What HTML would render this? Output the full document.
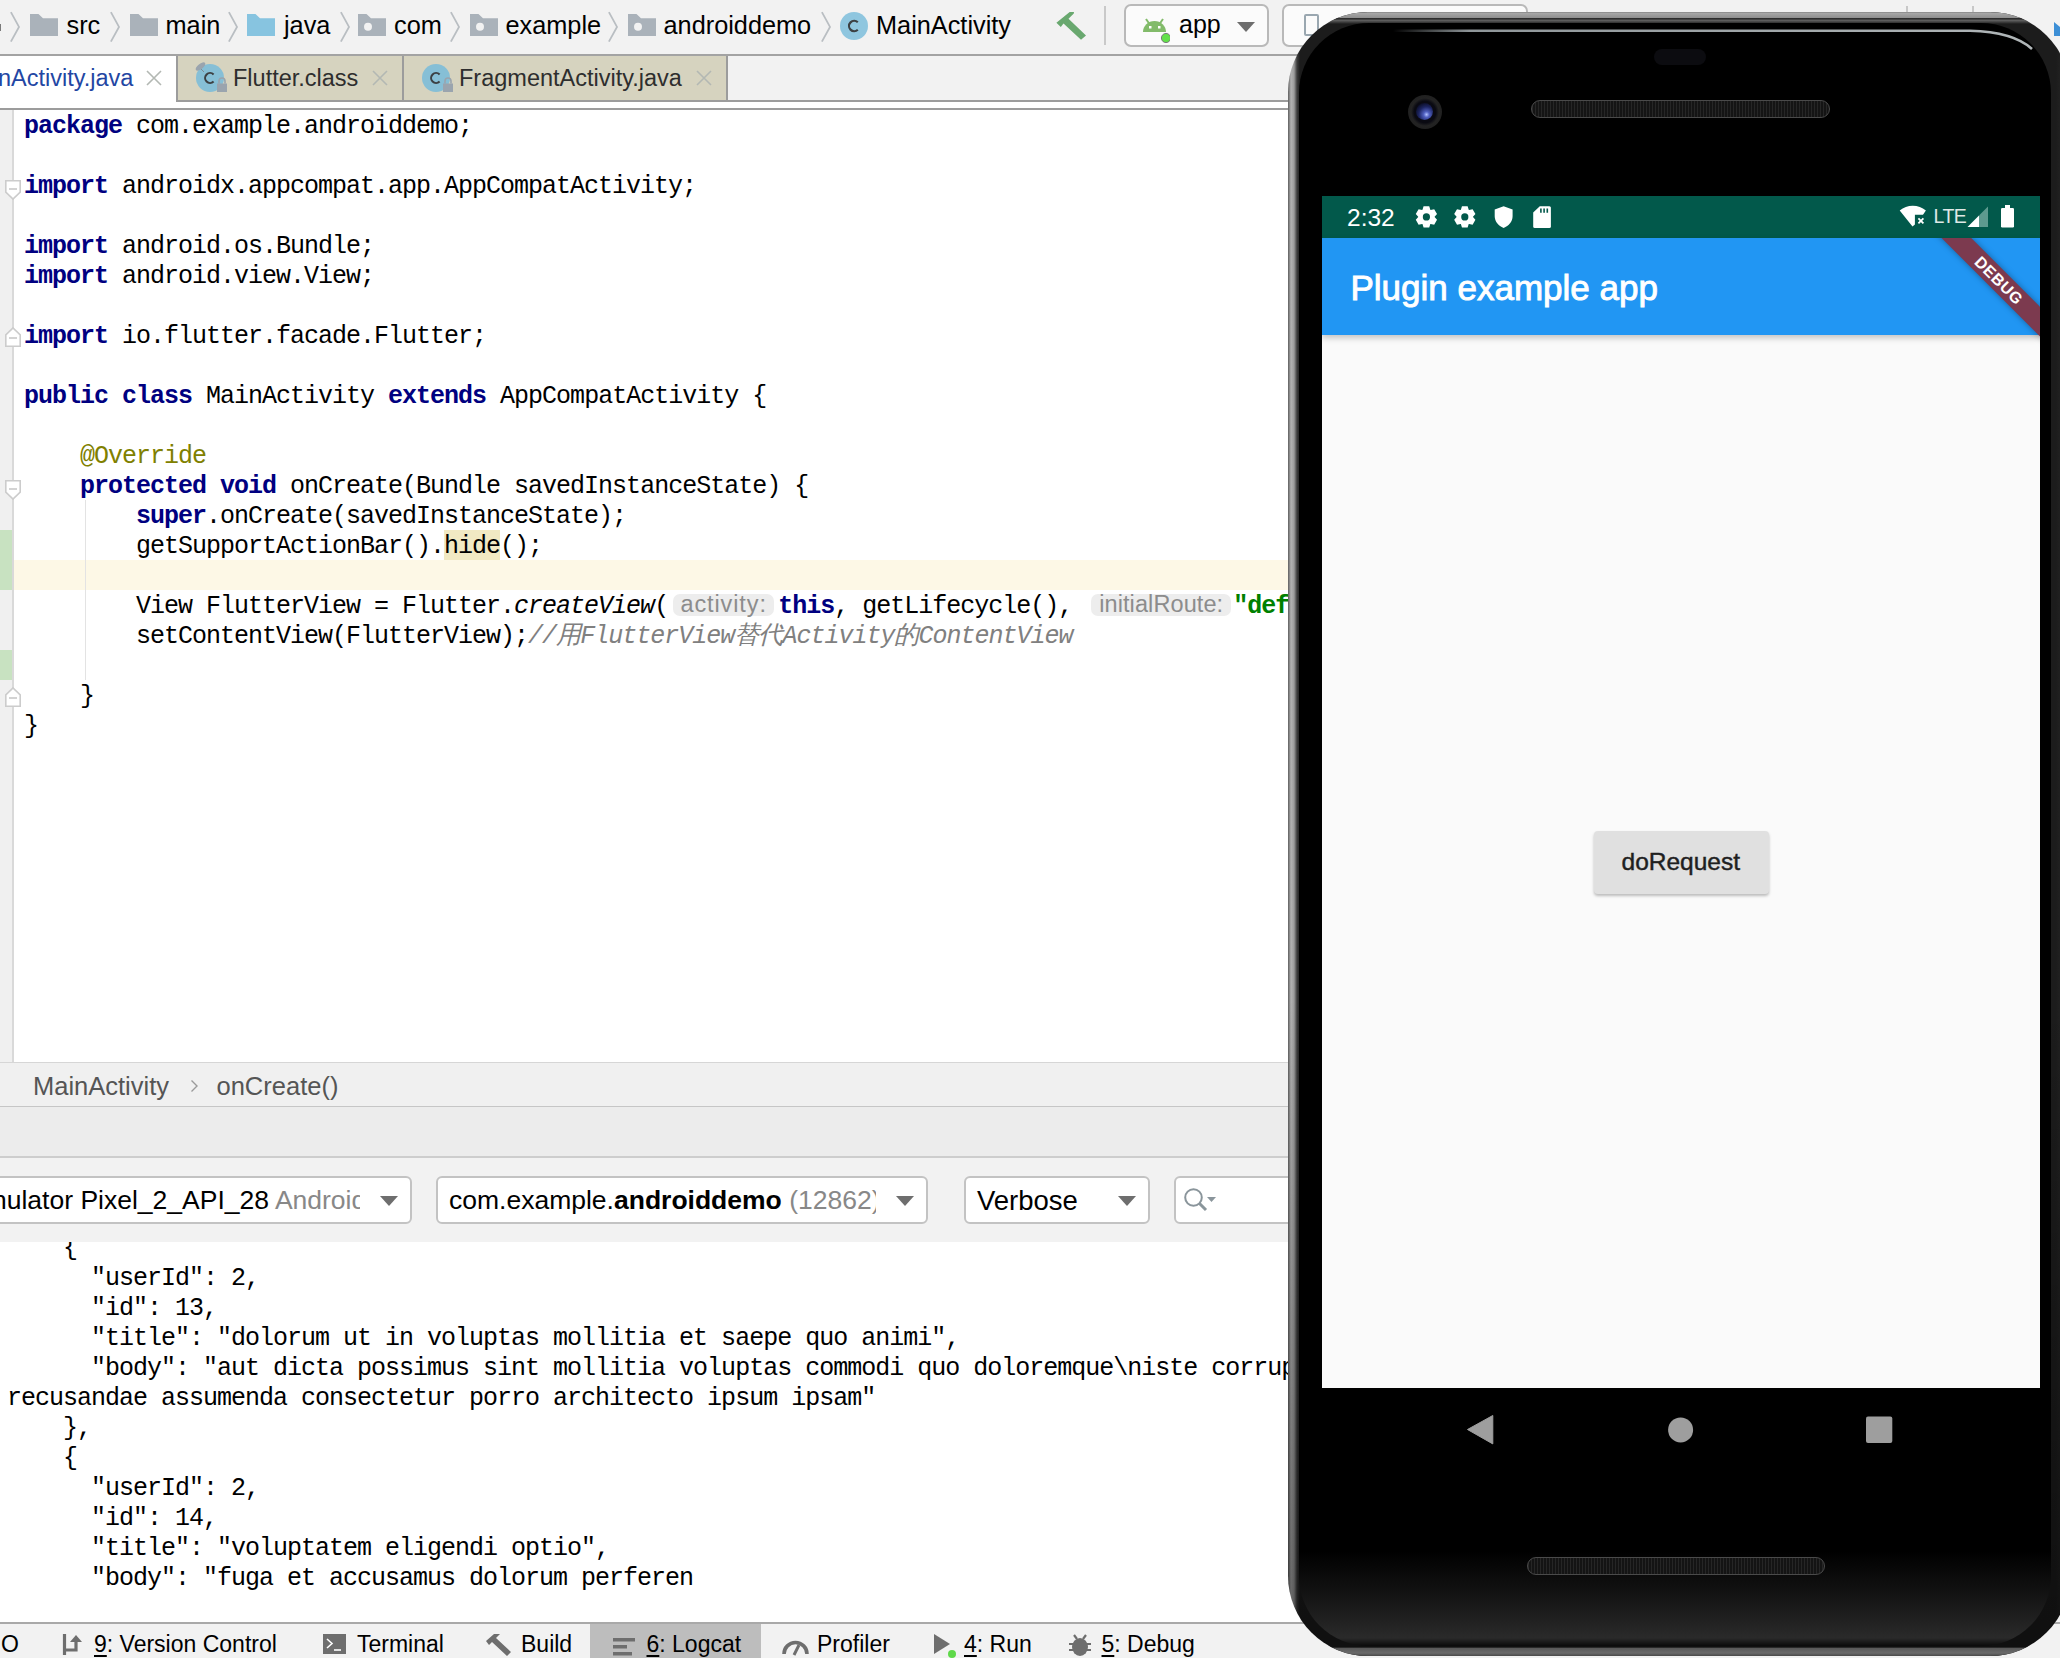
<!DOCTYPE html>
<html><head><meta charset="utf-8">
<style>
*{box-sizing:border-box;margin:0;padding:0}
html,body{width:2060px;height:1658px;overflow:hidden;background:#f2f2f2}
body{position:relative;font-family:"Liberation Sans",sans-serif}
.a{position:absolute}
.t{white-space:pre}
.code{font-family:"Liberation Mono",monospace;font-size:25px;letter-spacing:-1.0px;line-height:30px;white-space:pre;color:#000}
.kw{color:#000080;font-weight:bold}
.ann{color:#808000}
.cm{color:#808080;font-style:italic}
.str{color:#008000;font-weight:bold}
.hint{display:inline-block;vertical-align:top;font-family:"Liberation Sans",sans-serif;font-size:22px;color:#8c8c8c;background:#ededed;border-radius:7px;height:22px;margin-top:2px;line-height:21px;text-align:center}
.cj{display:inline-block;width:24.1px}
</style></head><body>

<div class="a" style="left:0px;top:0px;width:2060px;height:54px;background:#f2f2f2;"></div>
<div class="a" style="left:0px;top:54px;width:2060px;height:2px;background:#a3a3a3;"></div>
<div class="a" style="left:0px;top:23.7px;width:1.3px;height:7.3px;background:#7a7a7a;"></div>
<svg class="a" style="left:10.3px;top:11px;" width="12" height="32" viewBox="0 0 12 32"><path d="M0.9 1.1 L9 15.9 L0.9 30.6" fill="none" stroke="#b9bec2" stroke-width="1.8"/></svg>
<svg class="a" style="left:110px;top:11px;" width="12" height="32" viewBox="0 0 12 32"><path d="M0.9 1.1 L9 15.9 L0.9 30.6" fill="none" stroke="#b9bec2" stroke-width="1.8"/></svg>
<svg class="a" style="left:228px;top:11px;" width="12" height="32" viewBox="0 0 12 32"><path d="M0.9 1.1 L9 15.9 L0.9 30.6" fill="none" stroke="#b9bec2" stroke-width="1.8"/></svg>
<svg class="a" style="left:340px;top:11px;" width="12" height="32" viewBox="0 0 12 32"><path d="M0.9 1.1 L9 15.9 L0.9 30.6" fill="none" stroke="#b9bec2" stroke-width="1.8"/></svg>
<svg class="a" style="left:450px;top:11px;" width="12" height="32" viewBox="0 0 12 32"><path d="M0.9 1.1 L9 15.9 L0.9 30.6" fill="none" stroke="#b9bec2" stroke-width="1.8"/></svg>
<svg class="a" style="left:608px;top:11px;" width="12" height="32" viewBox="0 0 12 32"><path d="M0.9 1.1 L9 15.9 L0.9 30.6" fill="none" stroke="#b9bec2" stroke-width="1.8"/></svg>
<svg class="a" style="left:820.6px;top:11px;" width="12" height="32" viewBox="0 0 12 32"><path d="M0.9 1.1 L9 15.9 L0.9 30.6" fill="none" stroke="#b9bec2" stroke-width="1.8"/></svg>
<svg class="a" style="left:30px;top:14px;" width="28" height="22" viewBox="0 0 28 22"><path d="M0 0 H8.5 L13 4.2 H28 V22 H0 Z" fill="#aab2ba"/></svg>
<svg class="a" style="left:130px;top:14px;" width="28" height="22" viewBox="0 0 28 22"><path d="M0 0 H8.5 L13 4.2 H28 V22 H0 Z" fill="#aab2ba"/></svg>
<svg class="a" style="left:247px;top:14px;" width="28" height="22" viewBox="0 0 28 22"><path d="M0 0 H8.5 L13 4.2 H28 V22 H0 Z" fill="#87c4e0"/></svg>
<svg class="a" style="left:358px;top:14px;" width="28" height="22" viewBox="0 0 28 22"><path d="M0 0 H8.5 L13 4.2 H28 V22 H0 Z" fill="#aab2ba"/><circle cx="10" cy="12.8" r="4" fill="#f2f2f2"/></svg>
<svg class="a" style="left:470px;top:14px;" width="28" height="22" viewBox="0 0 28 22"><path d="M0 0 H8.5 L13 4.2 H28 V22 H0 Z" fill="#aab2ba"/><circle cx="10" cy="12.8" r="4" fill="#f2f2f2"/></svg>
<svg class="a" style="left:628px;top:14px;" width="28" height="22" viewBox="0 0 28 22"><path d="M0 0 H8.5 L13 4.2 H28 V22 H0 Z" fill="#aab2ba"/><circle cx="10" cy="12.8" r="4" fill="#f2f2f2"/></svg>
<div class="a t" style="left:66.5px;top:12.50px;font-size:25.3px;line-height:25.3px;color:#000;font-weight:400;font-family:"Liberation Sans",sans-serif;">src</div>
<div class="a t" style="left:165.5px;top:12.50px;font-size:25.3px;line-height:25.3px;color:#000;font-weight:400;font-family:"Liberation Sans",sans-serif;">main</div>
<div class="a t" style="left:284px;top:12.50px;font-size:25.3px;line-height:25.3px;color:#000;font-weight:400;font-family:"Liberation Sans",sans-serif;">java</div>
<div class="a t" style="left:394px;top:12.50px;font-size:25.3px;line-height:25.3px;color:#000;font-weight:400;font-family:"Liberation Sans",sans-serif;">com</div>
<div class="a t" style="left:505.5px;top:12.50px;font-size:25.3px;line-height:25.3px;color:#000;font-weight:400;font-family:"Liberation Sans",sans-serif;">example</div>
<div class="a t" style="left:663.5px;top:12.50px;font-size:25.3px;line-height:25.3px;color:#000;font-weight:400;font-family:"Liberation Sans",sans-serif;">androiddemo</div>
<div class="a t" style="left:876px;top:12.50px;font-size:25.3px;line-height:25.3px;color:#000;font-weight:400;font-family:"Liberation Sans",sans-serif;">MainActivity</div>
<svg class="a" style="left:840px;top:12px;" width="28" height="28" viewBox="0 0 28 28"><circle cx="14" cy="14" r="14" fill="#8fc6df"/><path d="M17.8 10.2 A5.2 5.2 0 1 0 17.8 17.8" fill="none" stroke="#3c4043" stroke-width="2.2"/></svg>
<svg class="a" style="left:1040px;top:0px;" width="50" height="44" viewBox="0 0 50 44"><path d="M16.4 22.7 L29.7 12 L34 12 L33.8 13.6 L28.5 18.8 L46 35.4 L41 39.8 L23.5 23.5 L20.8 27.1 Z" fill="#69a86f"/></svg>
<div class="a" style="left:1104px;top:6px;width:1.5px;height:39px;background:#c9c9c9;"></div>
<div class="a" style="left:1124px;top:4px;width:145px;height:43px;background:#fbfbfb;border:2px solid #b9b9b9;border-radius:7px"></div>
<svg class="a" style="left:1140px;top:16px;" width="30" height="28" viewBox="0 0 30 28"><path d="M3 16 A11.5 11 0 0 1 26 16 Z" fill="#82bb6a"/><line x1="6" y1="3" x2="9.5" y2="8" stroke="#82bb6a" stroke-width="2"/><line x1="23" y1="3" x2="19.5" y2="8" stroke="#82bb6a" stroke-width="2"/><rect x="9" y="10" width="2.5" height="2.5" fill="#fff"/><rect x="18" y="10" width="2.5" height="2.5" fill="#fff"/><circle cx="26" cy="22" r="4.6" fill="#62e04a" stroke="#7a7a7a" stroke-width="1"/></svg>
<div class="a t" style="left:1179px;top:12.25px;font-size:25px;line-height:25px;color:#000;font-weight:400;font-family:"Liberation Sans",sans-serif;">app</div>
<svg class="a" style="left:1237px;top:22px;" width="18" height="10" viewBox="0 0 18 10"><path d="M0 0 H18 L9 10 Z" fill="#6e6e6e"/></svg>
<div class="a" style="left:1282px;top:4px;width:246px;height:43px;background:#fbfbfb;border:2px solid #b9b9b9;border-radius:7px"></div>
<div class="a" style="left:1304px;top:14px;width:15px;height:22px;background:transparent;border:2.5px solid #9aa7b0;border-radius:2px"></div>
<div class="a" style="left:1906px;top:6px;width:1.5px;height:8px;background:#c8c8c8;"></div>
<div class="a" style="left:1972px;top:6px;width:1.5px;height:8px;background:#c8c8c8;"></div>
<svg class="a" style="left:2054px;top:22px;" width="6" height="14" viewBox="0 0 6 14"><path d="M0 0 L6 5 V14 H0 Z" fill="#3d8fd6"/></svg>
<div class="a" style="left:0px;top:56px;width:2060px;height:45px;background:#f2f2f2;"></div>
<div class="a" style="left:0px;top:100px;width:2060px;height:2px;background:#9c9c9c;"></div>
<div class="a" style="left:0px;top:102px;width:2060px;height:6px;background:#ffffff;"></div>
<div class="a" style="left:0px;top:56px;width:176px;height:52px;background:#ffffff;"></div>
<div class="a" style="left:176px;top:56px;width:552px;height:46px;background:#d6d3bf;border-left:2px solid #9c9c9c;border-bottom:2px solid #9c9c9c;border-right:2px solid #9c9c9c"></div>
<div class="a" style="left:402px;top:56px;width:2px;height:46px;background:#9c9c9c;"></div>
<div class="a t" style="left:-2px;top:67.03px;font-size:23.5px;line-height:23.5px;color:#2346a3;font-weight:400;font-family:"Liberation Sans",sans-serif;">nActivity.java</div>
<svg class="a" style="left:146px;top:70px;" width="16" height="16" viewBox="0 0 16 16"><path d="M1 1 L15 15 M15 1 L1 15" stroke="#b3b8b3" stroke-width="1.6"/></svg>
<svg class="a" style="left:372px;top:70px;" width="16" height="16" viewBox="0 0 16 16"><path d="M1 1 L15 15 M15 1 L1 15" stroke="#b3b8b3" stroke-width="1.6"/></svg>
<svg class="a" style="left:696px;top:70px;" width="16" height="16" viewBox="0 0 16 16"><path d="M1 1 L15 15 M15 1 L1 15" stroke="#b3b8b3" stroke-width="1.6"/></svg>
<svg class="a" style="left:194px;top:60px;" width="36" height="34" viewBox="0 0 36 34"><circle cx="16" cy="18" r="14" fill="#86bfd6"/><path d="M19.6 14.4 A5 5 0 1 0 19.6 21.6" fill="none" stroke="#3c4043" stroke-width="2.1"/><rect x="23" y="23.5" width="10" height="8.5" fill="#9aa4ae"/><path d="M25 23.5 V21 A3 3 0 0 1 31 21 V23.5" fill="none" stroke="#9aa4ae" stroke-width="1.6"/><line x1="6" y1="8" x2="10" y2="12" stroke="#7d8a94" stroke-width="1"/><ellipse cx="6.5" cy="6.5" rx="5.8" ry="2.6" transform="rotate(-38 6.5 6.5)" fill="#9aa4ae"/></svg>
<svg class="a" style="left:420px;top:60px;" width="36" height="34" viewBox="0 0 36 34"><circle cx="16" cy="18" r="14" fill="#86bfd6"/><path d="M19.6 14.4 A5 5 0 1 0 19.6 21.6" fill="none" stroke="#3c4043" stroke-width="2.1"/><rect x="23" y="23.5" width="10" height="8.5" fill="#9aa4ae"/><path d="M25 23.5 V21 A3 3 0 0 1 31 21 V23.5" fill="none" stroke="#9aa4ae" stroke-width="1.6"/></svg>
<div class="a t" style="left:233px;top:67.03px;font-size:23.5px;line-height:23.5px;color:#2e2e2e;font-weight:400;font-family:"Liberation Sans",sans-serif;">Flutter.class</div>
<div class="a t" style="left:459px;top:67.03px;font-size:23.5px;line-height:23.5px;color:#2e2e2e;font-weight:400;font-family:"Liberation Sans",sans-serif;">FragmentActivity.java</div>
<div class="a" style="left:0px;top:108px;width:1300px;height:2px;background:#9c9c9c;"></div>
<div class="a" style="left:0px;top:110px;width:1300px;height:952px;background:#ffffff;"></div>
<div class="a" style="left:0px;top:110px;width:12px;height:952px;background:#f0f0f0;"></div>
<div class="a" style="left:12px;top:110px;width:1.5px;height:952px;background:#d9d9d9;"></div>
<div class="a" style="left:13.5px;top:560px;width:1287px;height:30px;background:#fdf8e6;"></div>
<div class="a" style="left:0px;top:530px;width:12px;height:60px;background:#c8e2c1;"></div>
<div class="a" style="left:0px;top:650px;width:12px;height:30px;background:#c8e2c1;"></div>
<div class="a" style="left:85px;top:500px;width:1px;height:180px;background:#e3e3e3;"></div>
<div class="a" style="left:444px;top:530px;width:56px;height:30px;background:#f1e9c3;"></div>
<svg class="a" style="left:5px;top:179.5px;" width="16" height="20" viewBox="0 0 16 20"><path d="M0.75 0.75 H15.25 V12 L8 19 L0.75 12 Z" fill="#ffffff" stroke="#cccccc" stroke-width="1.7"/><line x1="4" y1="9" x2="12" y2="9" stroke="#cccccc" stroke-width="1.7"/></svg>
<svg class="a" style="left:5px;top:327px;" width="16" height="20" viewBox="0 0 16 20"><path d="M0.75 19.25 H15.25 V8 L8 1 L0.75 8 Z" fill="#ffffff" stroke="#cccccc" stroke-width="1.7"/><line x1="4" y1="11" x2="12" y2="11" stroke="#cccccc" stroke-width="1.7"/></svg>
<svg class="a" style="left:5px;top:479.5px;" width="16" height="20" viewBox="0 0 16 20"><path d="M0.75 0.75 H15.25 V12 L8 19 L0.75 12 Z" fill="#ffffff" stroke="#cccccc" stroke-width="1.7"/><line x1="4" y1="9" x2="12" y2="9" stroke="#cccccc" stroke-width="1.7"/></svg>
<svg class="a" style="left:5px;top:687px;" width="16" height="20" viewBox="0 0 16 20"><path d="M0.75 19.25 H15.25 V8 L8 1 L0.75 8 Z" fill="#ffffff" stroke="#cccccc" stroke-width="1.7"/><line x1="4" y1="11" x2="12" y2="11" stroke="#cccccc" stroke-width="1.7"/></svg>
<div class="a code" style="left:24px;top:112.4px"><span class="kw">package</span> com.example.androiddemo;

<span class="kw">import</span> androidx.appcompat.app.AppCompatActivity;

<span class="kw">import</span> android.os.Bundle;
<span class="kw">import</span> android.view.View;

<span class="kw">import</span> io.flutter.facade.Flutter;

<span class="kw">public class</span> MainActivity <span class="kw">extends</span> AppCompatActivity {

    <span class="ann">@Override</span>
    <span class="kw">protected void</span> onCreate(Bundle savedInstanceState) {
        <span class="kw">super</span>.onCreate(savedInstanceState);
        getSupportActionBar().hide();

        View FlutterView = Flutter.<i>createView</i>(<span class="hint" style="width:101px;margin-left:5px;margin-right:4px;font-size:23.5px;letter-spacing:0.9px">activity:</span><span class="kw">this</span>, getLifecycle(), <span class="hint" style="width:140px;margin-left:5px;margin-right:2px;font-size:23.5px;letter-spacing:0.1px">initialRoute:</span><span class="str">"default"</span>);
        setContentView(FlutterView);<span class="cm">//<span class="cj">用</span>FlutterView<span class="cj">替</span><span class="cj">代</span>Activity<span class="cj">的</span>ContentView</span>

    }
}</div>
<div class="a" style="left:0px;top:1062px;width:1300px;height:1px;background:#d6d6d6;"></div>
<div class="a" style="left:0px;top:1063px;width:1300px;height:43px;background:#f0f0f0;"></div>
<div class="a" style="left:0px;top:1106px;width:1300px;height:1px;background:#c6c6c6;"></div>
<div class="a t" style="left:33px;top:1073.83px;font-size:25.5px;line-height:25.5px;color:#555555;font-weight:400;font-family:"Liberation Sans",sans-serif;">MainActivity</div>
<svg class="a" style="left:190px;top:1079px;" width="9" height="14" viewBox="0 0 9 14"><path d="M1.5 1.5 L7 7 L1.5 12.5" fill="none" stroke="#9a9a9a" stroke-width="1.4"/></svg>
<div class="a t" style="left:216.5px;top:1073.83px;font-size:25.5px;line-height:25.5px;color:#555555;font-weight:400;font-family:"Liberation Sans",sans-serif;">onCreate()</div>
<div class="a" style="left:0px;top:1107px;width:1300px;height:49px;background:#ececec;"></div>
<div class="a" style="left:0px;top:1156px;width:1300px;height:2px;background:#cdcdcd;"></div>
<div class="a" style="left:0px;top:1158px;width:1300px;height:83px;background:#f2f2f2;"></div>
<div class="a" style="left:-10px;top:1176px;width:421.5px;height:47.5px;background:#ffffff;border:2px solid #c3c3c3;border-radius:6px"></div>
<div class="a" style="left:436px;top:1176px;width:492px;height:47.5px;background:#ffffff;border:2px solid #c3c3c3;border-radius:6px"></div>
<div class="a" style="left:964px;top:1176px;width:186px;height:47.5px;background:#ffffff;border:2px solid #c3c3c3;border-radius:6px"></div>
<div class="a" style="left:1174px;top:1176px;width:200px;height:47.5px;background:#ffffff;border:2px solid #c3c3c3;border-radius:6px"></div>
<div class="a" style="left:0;top:1178px;width:360px;height:43px;overflow:hidden">
<div class="a t" style="left:-8px;top:9.48px;font-size:26.5px;line-height:26.5px;color:#000;font-weight:400;font-family:"Liberation Sans",sans-serif;">nulator Pixel_2_API_28 <span style="color:#888">Android</span></div>
</div>
<svg class="a" style="left:380px;top:1196px;" width="18" height="10" viewBox="0 0 18 10"><path d="M0 0 H18 L9 10 Z" fill="#6e6e6e"/></svg>
<div class="a" style="left:440px;top:1178px;width:436px;height:43px;overflow:hidden">
<div class="a t" style="left:9px;top:9.48px;font-size:26.5px;line-height:26.5px;color:#000;font-weight:400;font-family:"Liberation Sans",sans-serif;">com.example.<b>androiddemo</b> <span style="color:#888">(12862)</span></div>
</div>
<svg class="a" style="left:896px;top:1196px;" width="18" height="10" viewBox="0 0 18 10"><path d="M0 0 H18 L9 10 Z" fill="#6e6e6e"/></svg>
<div class="a t" style="left:977px;top:1186.62px;font-size:27.5px;line-height:27.5px;color:#000;font-weight:400;font-family:"Liberation Sans",sans-serif;">Verbose</div>
<svg class="a" style="left:1118px;top:1196px;" width="18" height="10" viewBox="0 0 18 10"><path d="M0 0 H18 L9 10 Z" fill="#6e6e6e"/></svg>
<svg class="a" style="left:1182px;top:1186px;" width="36" height="28" viewBox="0 0 36 28"><circle cx="11.5" cy="11.5" r="8.3" fill="none" stroke="#8a959b" stroke-width="2"/><line x1="17.5" y1="17.5" x2="24" y2="24" stroke="#8a959b" stroke-width="3"/><path d="M25 11 H34 L29.5 16 Z" fill="#8a959b"/></svg>
<div class="a" style="left:0px;top:1242px;width:1300px;height:380px;background:#ffffff;"></div>
<div class="a" style="left:0;top:1242px;width:1300px;height:380px;overflow:hidden">
<div class="a code" style="left:7px;top:-7.8px">    {
      "userId": 2,
      "id": 13,
      "title": "dolorum ut in voluptas mollitia et saepe quo animi",
      "body": "aut dicta possimus sint mollitia voluptas commodi quo doloremque\niste corrupti reiciendis voluptatem eius rerum\nsit cumque quod eligendi laborum minima\nperferendis
recusandae assumenda consectetur porro architecto ipsum ipsam"
    },
    {
      "userId": 2,
      "id": 14,
      "title": "voluptatem eligendi optio",
      "body": "fuga et accusamus dolorum perferen</div>
</div>
<div class="a" style="left:0px;top:1622px;width:2060px;height:2px;background:#a9a9a9;"></div>
<div class="a" style="left:0px;top:1624px;width:2060px;height:34px;background:#f2f2f2;"></div>
<div class="a" style="left:590px;top:1624px;width:171px;height:34px;background:#bdbdbd;"></div>
<div class="a t" style="left:1px;top:1633.45px;font-size:23px;line-height:23px;color:#000;font-weight:400;font-family:"Liberation Sans",sans-serif;">O</div>
<svg class="a" style="left:62px;top:1632px;" width="26" height="24" viewBox="0 0 26 24"><path d="M2.5 2 V23" stroke="#6e6e6e" stroke-width="3.2"/><path d="M2.5 18 H14 V9" fill="none" stroke="#6e6e6e" stroke-width="3.2"/><path d="M8 10 L14 3 L20 10 Z" fill="#6e6e6e"/></svg>
<div class="a t" style="left:94px;top:1633.45px;font-size:23px;line-height:23px;color:#000;font-weight:400;font-family:"Liberation Sans",sans-serif;"><span style="text-decoration:underline;text-underline-offset:3px">9</span>: Version Control</div>
<svg class="a" style="left:323px;top:1634px;" width="23" height="20" viewBox="0 0 23 20"><rect width="23" height="20" fill="#6e6e6e"/><path d="M4 5 L9 9.5 L4 14" fill="none" stroke="#fff" stroke-width="1.6"/><line x1="11" y1="16" x2="18" y2="16" stroke="#fff" stroke-width="1.6"/></svg>
<div class="a t" style="left:357px;top:1633.45px;font-size:23px;line-height:23px;color:#000;font-weight:400;font-family:"Liberation Sans",sans-serif;">Terminal</div>
<svg class="a" style="left:484px;top:1632px;" width="30" height="26" viewBox="0 0 30 26"><path d="M2 9 L10 2 L16 2 L12 6 L27 20 L23 24 L8 10 L5 13 Z" fill="#6e6e6e"/></svg>
<div class="a t" style="left:521px;top:1633.45px;font-size:23px;line-height:23px;color:#000;font-weight:400;font-family:"Liberation Sans",sans-serif;">Build</div>
<svg class="a" style="left:613px;top:1638px;" width="24" height="18" viewBox="0 0 24 18"><rect x="0" y="0" width="22" height="3.5" fill="#6e6e6e"/><rect x="0" y="7" width="14" height="3.5" fill="#6e6e6e"/><rect x="0" y="14" width="19" height="3.5" fill="#6e6e6e"/></svg>
<div class="a t" style="left:646.5px;top:1633.45px;font-size:23px;line-height:23px;color:#000;font-weight:400;font-family:"Liberation Sans",sans-serif;"><span style="text-decoration:underline;text-underline-offset:3px">6</span>: Logcat</div>
<svg class="a" style="left:780px;top:1634px;" width="30" height="24" viewBox="0 0 30 24"><path d="M4 20 A11.5 11.5 0 0 1 27 20" fill="none" stroke="#6e6e6e" stroke-width="3.6"/><line x1="14" y1="21" x2="19" y2="11" stroke="#6e6e6e" stroke-width="3"/></svg>
<div class="a t" style="left:817px;top:1633.45px;font-size:23px;line-height:23px;color:#000;font-weight:400;font-family:"Liberation Sans",sans-serif;">Profiler</div>
<svg class="a" style="left:932px;top:1633px;" width="26" height="25" viewBox="0 0 26 25"><path d="M2 1 L18 11 L2 21 Z" fill="#6e6e6e"/><circle cx="20" cy="21" r="4" fill="#5fd94a"/></svg>
<div class="a t" style="left:964px;top:1633.45px;font-size:23px;line-height:23px;color:#000;font-weight:400;font-family:"Liberation Sans",sans-serif;"><span style="text-decoration:underline;text-underline-offset:3px">4</span>: Run</div>
<svg class="a" style="left:1068px;top:1632px;" width="26" height="26" viewBox="0 0 26 26"><ellipse cx="12" cy="15" rx="8" ry="9" fill="#6e6e6e"/><path d="M6 3 L9 7 M18 3 L15 7 M1 12 H5 M19 12 H23 M1 18 H5 M19 18 H23" stroke="#6e6e6e" stroke-width="2.2"/></svg>
<div class="a t" style="left:1101.5px;top:1633.45px;font-size:23px;line-height:23px;color:#000;font-weight:400;font-family:"Liberation Sans",sans-serif;"><span style="text-decoration:underline;text-underline-offset:3px">5</span>: Debug</div>
<div class="a" style="left:1288px;top:12px;width:782px;height:1644px;border-radius:80px;background:linear-gradient(180deg,rgba(0,0,0,0) 0,rgba(0,0,0,0) 60%,rgba(0,0,0,0.45) 100%),linear-gradient(90deg,#5e5e5e 0,#b3b3b3 3px,#9c9c9c 6px,#3c3c3c 9px,#1c1c1c 12px,#1c1c1c calc(100% - 14px),#2c2c2c 100%)"></div>
<div class="a" style="left:1288px;top:12px;width:782px;height:1644px;border-radius:80px;background:linear-gradient(180deg,#858585 0,#a6a6a6 1.5px,#8e8e8e 6px,#1a1a1a 6.6px,#1a1a1a 7.2px,#6a6a6a 7.8px,rgba(0,0,0,0) 12px,rgba(0,0,0,0) calc(100% - 12px),#101010 calc(100% - 9px),#5a5a5a calc(100% - 7.5px),#6a6a6a calc(100% - 3px),#4a4a4a 100%)"></div>
<div class="a" style="left:1299px;top:23px;width:752px;height:1623px;border-radius:70px;background:linear-gradient(180deg,#000 0,#000 calc(100% - 95px),#141414 calc(100% - 50px),#2a2a2a calc(100% - 8px),#0a0a0a 100%)"></div>
<svg class="a" style="left:1380px;top:20px" width="680" height="40"><defs><linearGradient id="hl" x1="0" x2="1" y1="0" y2="0"><stop offset="0" stop-color="#8f9699" stop-opacity="0"/><stop offset="0.12" stop-color="#8f9699"/><stop offset="1" stop-color="#b0b6b8"/></linearGradient></defs><path d="M13 10.8 H590 C620 11.5 640 18 652 29" fill="none" stroke="url(#hl)" stroke-width="2.6"/></svg>

<div class="a" style="left:1407.5px;top:94.5px;width:34px;height:34px;border-radius:50%;background:radial-gradient(circle,#0a0a12 0,#0a0a12 45%,#232323 58%,#1c1c1c 92%,#0a0a0a 100%)"></div>
<div class="a" style="left:1416px;top:103px;width:17px;height:17px;border-radius:50%;background:radial-gradient(circle at 62% 68%,#b0c0ff 0,#5060c0 18%,#1c2460 50%,#0a0c20 80%,#050508 100%)"></div>
<div class="a" style="left:1531px;top:100px;width:299px;height:18px;border-radius:9px;background:repeating-linear-gradient(90deg,#262626 0 1.5px,#141414 1.5px 3px);border:1.5px solid #4a4a4a"></div>
<div class="a" style="left:1654px;top:49px;width:52px;height:16px;border-radius:8px;background:#0c0c10"></div>
<div class="a" style="left:1527px;top:1557px;width:298px;height:18px;border-radius:9px;background:repeating-linear-gradient(90deg,#262626 0 1.5px,#141414 1.5px 3px);border:1.5px solid #4a4a4a"></div>
<div class="a" style="left:1322px;top:196px;width:718px;height:1192px;background:#fafafa;overflow:hidden">
<div class="a" style="left:0;top:0;width:718px;height:42px;background:#02594b"></div>
<div class="a" style="left:0;top:42px;width:718px;height:97px;background:#2196f3;box-shadow:0 3px 6px rgba(0,0,0,0.22)"></div>
<div class="a t" style="left:25px;top:9.78px;font-size:24.5px;line-height:24.5px;color:#fff;font-weight:400;">2:32</div>
<svg class="a" style="left:0;top:0" width="718" height="42"><path d="M107.23 10.27 L101.57 10.27 L100.47 13.70 L100.13 13.90 L96.61 13.14 L93.78 18.03 L96.20 20.71 L96.20 21.09 L93.78 23.77 L96.61 28.66 L100.13 27.90 L100.47 28.10 L101.57 31.53 L107.23 31.53 L108.33 28.10 L108.67 27.90 L112.19 28.66 L115.02 23.77 L112.60 21.09 L112.60 20.71 L115.02 18.03 L112.19 13.14 L108.67 13.90 L108.33 13.70 Z" fill="#fff"/><circle cx="104.4" cy="20.9" r="3.6" fill="#02594b"/><path d="M145.63 10.27 L139.97 10.27 L138.87 13.70 L138.53 13.90 L135.01 13.14 L132.18 18.03 L134.60 20.71 L134.60 21.09 L132.18 23.77 L135.01 28.66 L138.53 27.90 L138.87 28.10 L139.97 31.53 L145.63 31.53 L146.73 28.10 L147.07 27.90 L150.59 28.66 L153.42 23.77 L151.00 21.09 L151.00 20.71 L153.42 18.03 L150.59 13.14 L147.07 13.90 L146.73 13.70 Z" fill="#fff"/><circle cx="142.8" cy="20.9" r="3.6" fill="#02594b"/><path d="M172.7 13.6 L181.6 10.2 L190.6 13.6 V20 C190.6 25.5 186.8 30 181.6 31.9 C176.4 30 172.7 25.5 172.7 20 Z" fill="#fff"/><path d="M217.8 10.2 H227.4 Q228.9 10.2 228.9 11.7 V30.4 Q228.9 31.9 227.4 31.9 H212.7 Q211.2 31.9 211.2 30.4 V16.4 Z" fill="#fff"/><path d="M218.9 12.5 V16.8 M222.1 12.5 V16.8 M225.3 12.5 V16.8" stroke="#02594b" stroke-width="1.6"/><path d="M590.5 30.5 L577.7 14.6 A20.4 20.4 0 0 1 603.9 14.6 L601 18.7 H592.9 V28.5 Z" fill="#fff"/><path d="M596.4 22.4 L601.4 27.4 M601.4 22.4 L596.4 27.4" stroke="#fff" stroke-width="1.8"/><path d="M645.5 31 L657 31 L657 19.5 Z" fill="#fff"/><path d="M657 31 H666 V10.5 L657 19.5 Z" fill="#5e9a8f"/><rect x="679" y="12" width="13" height="19.5" rx="1.2" fill="#fff"/><rect x="683" y="9" width="5" height="4" fill="#fff"/></svg>
<div class="a t" style="left:611.5px;top:11.43px;font-size:19.5px;line-height:19.5px;color:#dfe9e7;font-weight:400;letter-spacing:-0.5px">LTE</div>
<div class="a t" style="left:28.5px;top:74.25px;font-size:35px;line-height:35px;color:#fff;font-weight:400;-webkit-text-stroke:0.9px #fff;letter-spacing:0px">Plugin example app</div>
<div class="a" style="left:0;top:42px;width:718px;height:1150px;overflow:hidden">
<div class="a" style="left:526px;top:31px;width:300px;height:20.5px;background:#7c3a4f;transform:rotate(45deg);box-shadow:0 0 6px rgba(0,0,0,0.35);text-align:center;color:#fff;font-weight:700;font-size:16px;line-height:21px;letter-spacing:0.6px;text-indent:3px">DEBUG</div>
</div>
<div class="a" style="left:271.5px;top:634.5px;width:175px;height:63px;background:#e0e0e0;border-radius:4px;box-shadow:0 2px 3px rgba(0,0,0,0.25)"></div>
<div class="a t" style="left:299.5px;top:653.88px;font-size:24.5px;line-height:24.5px;color:#1f1f1f;font-weight:400;-webkit-text-stroke:0.45px #1f1f1f">doRequest</div>
</div>
<svg class="a" style="left:1460px;top:1410px" width="440" height="40" viewBox="0 0 440 40"><path d="M32.8 5.5 L7.5 19.5 L32.8 33.9 Z" fill="#9e9e9e" stroke="#9e9e9e" stroke-width="1" stroke-linejoin="round"/><circle cx="220.6" cy="19.9" r="12.5" fill="#9e9e9e"/><rect x="406" y="6.6" width="26.3" height="26.4" rx="2" fill="#9e9e9e"/></svg>
</body></html>
